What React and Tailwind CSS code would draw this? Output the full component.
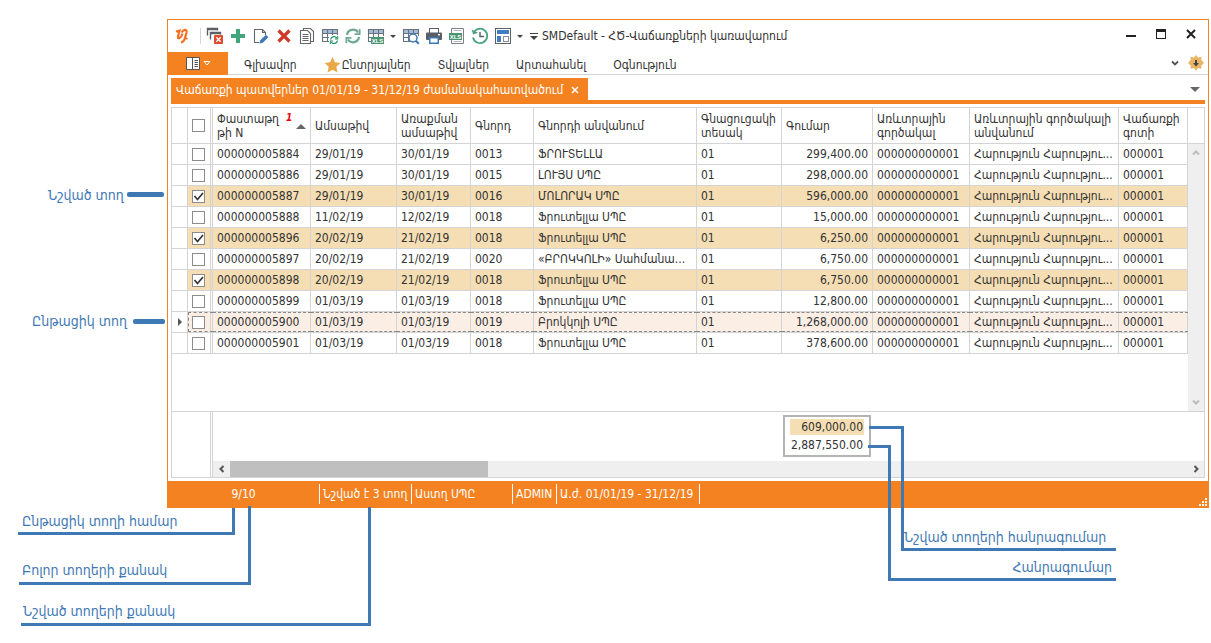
import React, { useState } from 'react';

const columns = [
	{ key: 'doc', label: 'Փաստաթղ թի N', width: 'w-[98px]', sorted: true },
	{ key: 'date', label: 'Ամսաթիվ', width: 'w-[86px]' },
	{ key: 'shipDate', label: 'Առաքման ամսաթիվ', width: 'w-[74px]' },
	{ key: 'buyer', label: 'Գնորդ', width: 'w-[63px]' },
	{ key: 'buyerName', label: 'Գնորդի անվանում', width: '' },
	{ key: 'priceType', label: 'Գնացուցակի տեսակ', width: 'w-[85px]' },
	{ key: 'sum', label: 'Գումար', width: 'w-[91px]', right: true },
	{ key: 'agent', label: 'Առևտրային գործակալ', width: 'w-[97px]' },
	{ key: 'agentName', label: 'Առևտրային գործակալի անվանում', width: 'w-[149px]' },
	{ key: 'zone', label: 'Վաճառքի գոտի', width: 'w-[69px]' },
];

const common = {
	priceType: '01',
	agent: '000000000001',
	agentName: 'Հարություն Հարությու...',
	zone: '000001',
};

const orders = [
	{ doc: '000000005884', date: '29/01/19', shipDate: '30/01/19', buyer: '0013', buyerName: 'ՖՐՈՒՏԵԼԼԱ', sum: '299,400.00' },
	{ doc: '000000005886', date: '29/01/19', shipDate: '30/01/19', buyer: '0015', buyerName: 'ԼՈՒՅՍ ՍՊԸ', sum: '298,000.00' },
	{ doc: '000000005887', date: '29/01/19', shipDate: '30/01/19', buyer: '0016', buyerName: 'ՄՈԼՈՐԱԿ ՍՊԸ', sum: '596,000.00' },
	{ doc: '000000005888', date: '11/02/19', shipDate: '12/02/19', buyer: '0018', buyerName: 'Ֆրուտելլա ՍՊԸ', sum: '15,000.00' },
	{ doc: '000000005896', date: '20/02/19', shipDate: '21/02/19', buyer: '0018', buyerName: 'Ֆրուտելլա ՍՊԸ', sum: '6,250.00' },
	{ doc: '000000005897', date: '20/02/19', shipDate: '21/02/19', buyer: '0020', buyerName: '«ԲՐՈԿԿՈԼԻ» Սահմանա...', sum: '6,750.00' },
	{ doc: '000000005898', date: '20/02/19', shipDate: '21/02/19', buyer: '0018', buyerName: 'Ֆրուտելլա ՍՊԸ', sum: '6,750.00' },
	{ doc: '000000005899', date: '01/03/19', shipDate: '01/03/19', buyer: '0018', buyerName: 'Ֆրուտելլա ՍՊԸ', sum: '12,800.00' },
	{ doc: '000000005900', date: '01/03/19', shipDate: '01/03/19', buyer: '0019', buyerName: 'Բրոկկոլի ՍՊԸ', sum: '1,268,000.00' },
	{ doc: '000000005901', date: '01/03/19', shipDate: '01/03/19', buyer: '0018', buyerName: 'Ֆրուտելլա ՍՊԸ', sum: '378,600.00' },
];

const CURRENT = '000000005900';

/* ---------- icons ---------- */

function Icon({ children }) {
	return (
		<svg width="18" height="18" viewBox="0 0 18 18" fill="none" aria-hidden="true">
			{children}
		</svg>
	);
}

const CloseAllIcon = () => (
	<Icon>
		<path d="M1.5 8.5v-7h10v2M1.5 2.5h10" stroke="#5a6068" strokeWidth="1.4" />
		<path d="M4.5 12.5v-7h10v2M4.5 6.5h10" stroke="#5a6068" strokeWidth="1.4" />
		<rect x="8" y="8" width="9" height="9" rx="1" fill="#dd4b2a" />
		<path d="M10.3 10.3l4.4 4.4M14.7 10.3l-4.4 4.4" stroke="#fff" strokeWidth="1.4" />
	</Icon>
);

const PlusIcon = () => (
	<Icon>
		<path d="M9 2v14M2 9h14" stroke="#42a57c" strokeWidth="4" />
	</Icon>
);

const EditIcon = () => (
	<Icon>
		<path d="M7.5 15.5h-5v-13h8l3 3V8M10.5 2.5v3h3" stroke="#62686e" strokeWidth="1.1" />
		<path d="M7.5 16.5l.8-3.2 5.6-5.5 2.5 2.4-5.6 5.5z" fill="#3d79b8" />
	</Icon>
);

const DeleteIcon = () => (
	<Icon>
		<path d="M3.5 3.5l11 11M14.5 3.5l-11 11" stroke="#d3392a" strokeWidth="3.2" />
	</Icon>
);

const CopyIcon = () => (
	<Icon>
		<path d="M5.5 3.5v-2h7l3 3v10h-3" stroke="#62686e" strokeWidth="1.1" />
		<path d="M2.5 3.5h7l3 3v10h-10z" fill="#fff" stroke="#62686e" strokeWidth="1.1" />
		<path d="M4.5 7.5h6M4.5 9.5h6M4.5 11.5h6M4.5 13.5h6" stroke="#62686e" />
	</Icon>
);

const Sheet = () => (
	<>
		<rect x="1" y="2" width="16" height="4" fill="#a3bcdc" />
		<path d="M1.5 2v13M6.5 2v13M11.5 2v8M16.5 2v7M1 2.5h16M1 6.5h16M1 10.5h11M1 14.5h8" stroke="#6b7178" strokeWidth="1.1" />
	</>
);

const SyncArrows = () => (
	<>
		<path d="M3 8a6 6 0 0 1 11-2.500M15 10a6 6 0 0 1-11 2.500" strokeWidth="2.200" />
		<path d="M15.600 2v5.200h-5M2.400 16v-5.200h5" strokeWidth="1.800" />
	</>
);

const RefreshTableIcon = () => (
	<Icon>
		<Sheet />
		<rect x="8" y="8" width="10" height="10" fill="#fff" />
		<g stroke="#1f9460" transform="translate(8 8) scale(.56)" strokeWidth="3">
			<SyncArrows />
		</g>
	</Icon>
);

const RefreshIcon = () => (
	<Icon>
		<g stroke="#6fa896">
			<SyncArrows />
		</g>
	</Icon>
);

const XlsTag = ({ x, y }) => (
	<>
		<rect x={x} y={y} width="13" height="7" fill="#4b9470" />
		<text x={x + 6.5} y={y + 6} textAnchor="middle" fontSize="6" fontWeight="700" fontFamily="Liberation Sans, sans-serif" fill="#fff">XLS</text>
	</>
);

const ExportXlsIcon = () => (
	<Icon>
		<Sheet />
		<XlsTag x={4} y={10} />
	</Icon>
);

const PreviewIcon = () => (
	<Icon>
		<Sheet />
		<circle cx="11" cy="11" r="4" fill="#fff" stroke="#3d79b8" strokeWidth="1.5" />
		<path d="M13.8 13.8l3 3" stroke="#3d79b8" strokeWidth="2" />
	</Icon>
);

const PrintIcon = () => (
	<Icon>
		<rect x="4.5" y="1.5" width="9" height="5" fill="#fff" stroke="#595f66" />
		<rect x="1" y="5.5" width="16" height="7.5" rx="1" fill="#595f66" />
		<rect x="4" y="10" width="10" height="7" fill="#3d79b8" />
		<rect x="5.5" y="11.5" width="7" height="4" fill="#fff" />
		<rect x="13" y="7" width="2" height="1.4" fill="#fff" />
	</Icon>
);

const XlsFileIcon = () => (
	<Icon>
		<path d="M3.500 16.500v-15h12v15z" stroke="#7b8187" />
		<XlsTag x={1} y={6} />
		<path d="M5.500 14.500h8M5.500 3.500h8" stroke="#b5babf" />
	</Icon>
);

const HistoryIcon = () => (
	<Icon>
		<path d="M2.6 5.6A7.2 7.2 0 1 1 2 10.5" stroke="#4ba07f" strokeWidth="1.8" />
		<path d="M.6 2.4l1.6 5 4.8-1.6z" fill="#4ba07f" />
		<path d="M9 5v4.5h4" stroke="#595f66" strokeWidth="1.4" />
	</Icon>
);

const LayoutIcon = () => (
	<Icon>
		<rect x="1.5" y="1.5" width="15" height="15" fill="#fff" stroke="#5b6169" />
		<rect x="3" y="3" width="12" height="4" fill="#3f7fc1" />
		<rect x="3" y="9" width="4" height="6" fill="#3f7fc1" />
		<rect x="9.5" y="9.5" width="5" height="5" stroke="#8a9097" />
	</Icon>
);

const Logo = () => (
	<svg width="14" height="16" viewBox="0 0 14 16" fill="none" stroke="#f36f21" aria-hidden="true">
		<path d="M1 3.500L4.500 2.500 3 8.500q-.4 2.200 1.400 1.600Q6.500 9 7.600 5.500" strokeWidth="2.200" />
		<path d="M6.500 4.500Q8.500 1.500 10.800 2q1.200.6.600 3L9.600 11q-.8 2.800-3.600 3.500" strokeWidth="2.200" />
		<path d="M9.800 9.500l2.700 1.500" strokeWidth="1.500" />
	</svg>
);

const Triangle = ({ className }) => (
	<svg width="10" height="5" viewBox="0 0 10 5" className={className} aria-hidden="true">
		<path d="M0 0h10L5 5z" fill="currentColor" />
	</svg>
);

const Chevron = ({ d, className }) => (
	<svg width="10" height="10" viewBox="0 0 10 10" fill="none" className={className} aria-hidden="true">
		<path d={d} stroke="currentColor" strokeWidth="2" />
	</svg>
);

/* ---------- small parts ---------- */

function ToolButton({ label, children }) {
	return (
		<button type="button" aria-label={label} className="flex h-6 w-[23px] items-center justify-center">
			{children}
		</button>
	);
}

function DropButton({ label }) {
	return (
		<button type="button" aria-label={label} className="flex h-6 w-3 items-center justify-center text-[#444]">
			<svg width="6" height="3" viewBox="0 0 6 3" aria-hidden="true">
				<path d="M0 0h6L3 3z" fill="currentColor" />
			</svg>
		</button>
	);
}

function CheckBox({ label, checked, onChange }) {
	return (
		<label className="relative block size-[13px]">
			<input
				type="checkbox"
				aria-label={label}
				checked={checked}
				onChange={onChange}
				className="peer block size-[13px] appearance-none border border-[#8c8c8c] bg-white"
			/>
			<svg viewBox="0 0 13 13" fill="none" className="pointer-events-none absolute inset-0 hidden size-[13px] peer-checked:block">
				<path d="M2.500 6l3 3.500L11 3" stroke="#333" strokeWidth="1.700" />
			</svg>
		</label>
	);
}

function TitleBar() {
	return (
		<header className="flex h-8 items-center">
			<div className="flex w-8 justify-center pr-1">
				<Logo />
			</div>
			<div className="mr-[2px] h-4 w-px bg-[#d4d4d4]" />
			<ToolButton label="Փակել բոլորը"><CloseAllIcon /></ToolButton>
			<ToolButton label="Ավելացնել"><PlusIcon /></ToolButton>
			<ToolButton label="Խմբագրել"><EditIcon /></ToolButton>
			<ToolButton label="Հեռացնել"><DeleteIcon /></ToolButton>
			<ToolButton label="Պատճենել"><CopyIcon /></ToolButton>
			<ToolButton label="Թարմացնել աղյուսակը"><RefreshTableIcon /></ToolButton>
			<ToolButton label="Թարմացնել"><RefreshIcon /></ToolButton>
			<ToolButton label="Արտահանել XLS"><ExportXlsIcon /></ToolButton>
			<DropButton label="Արտահանման տեսակներ" />
			<ToolButton label="Դիտել"><PreviewIcon /></ToolButton>
			<ToolButton label="Տպել"><PrintIcon /></ToolButton>
			<ToolButton label="XLS ֆայլ"><XlsFileIcon /></ToolButton>
			<ToolButton label="Պատմություն"><HistoryIcon /></ToolButton>
			<ToolButton label="Տեսք"><LayoutIcon /></ToolButton>
			<DropButton label="Տեսքեր" />
			<button type="button" aria-label="Կարգավորել վահանակը" className="flex h-6 w-4 items-center justify-center text-[#444]">
				<svg width="8" height="7" viewBox="0 0 8 7" aria-hidden="true">
					<path d="M0 0h8v1H0zM0 3h8L4 7z" fill="currentColor" />
				</svg>
			</button>
			<h1 className="flex-1 truncate">SMDefault - ՀԾ-Վաճառքների կառավարում</h1>
			<div className="flex pr-[2px] pb-1 text-[#222]">
				<button type="button" aria-label="Ծալել" className="flex h-6 w-[30px] items-center justify-center">
					<svg width="10" height="10" viewBox="0 0 10 10" aria-hidden="true"><path d="M0 6h10v2H0z" fill="currentColor" /></svg>
				</button>
				<button type="button" aria-label="Մեծացնել" className="flex h-6 w-[30px] items-center justify-center">
					<svg width="10" height="10" viewBox="0 0 10 10" aria-hidden="true"><path d="M0 0h10v10H0zM1 3v6h8V3z" fill="currentColor" fillRule="evenodd" /></svg>
				</button>
				<button type="button" aria-label="Փակել" className="flex h-6 w-[30px] items-center justify-center">
					<svg width="10" height="10" viewBox="0 0 10 10" aria-hidden="true"><path d="M1 1l8 8M9 1l-8 8" stroke="currentColor" strokeWidth="2" /></svg>
				</button>
			</div>
		</header>
	);
}

function Ribbon() {
	return (
		<nav className="flex h-[23px] border-b border-[#d4d4d4]">
			<button type="button" aria-label="Մենյու" className="flex h-[23px] w-[60px] items-center justify-center gap-[3px] bg-[#f58220]">
				<svg width="14" height="13" viewBox="0 0 14 13" aria-hidden="true">
					<path d="M.5.5h13v12H.5z" fill="#fff" stroke="#555" />
					<path d="M6.500 0v13" stroke="#555" />
					<path d="M8.500 3.500h3.500M8.500 5.500h3.500M8.500 7.500h3.500M8.500 9.500h3.500" stroke="#555" />
				</svg>
				<svg width="8" height="5" viewBox="0 0 8 5" aria-hidden="true">
					<path d="M1 .5h6L4 4z" fill="none" stroke="#fff" />
				</svg>
			</button>
			<div className="flex flex-1 items-center gap-[27px] pt-1 pl-4">
				<button type="button">Գլխավոր</button>
				<button type="button" className="flex items-center gap-px">
					<svg width="17" height="16" viewBox="0 0 24 24" aria-hidden="true">
						<path d="M12 0l3.600 8 8.400.9-6.300 5.800 1.800 8.600L12 19l-7.500 4.300 1.800-8.600L0 8.900 8.400 8z" fill="#eaa948" />
					</svg>
					Ընտրյալներ
				</button>
				<button type="button">Տվյալներ</button>
				<button type="button">Արտահանել</button>
				<button type="button">Օգնություն</button>
			</div>
			<div className="flex items-center gap-[9px] pr-1">
				<button type="button" aria-label="Ծալել ժապավենը" className="text-[#555]">
					<svg width="8" height="8" viewBox="0 0 8 8" fill="none" aria-hidden="true">
						<path d="M1 2.500l3 3 3-3" stroke="currentColor" strokeWidth="1.800" />
					</svg>
				</button>
				<button type="button" aria-label="Թարմացումներ">
					<svg width="16" height="16" viewBox="0 0 16 16" aria-hidden="true">
						<path d="M8 0l2 2.500 3.300-.8.1 3.300L16 8l-2.600 2.400-.1 3.300-3.300-.7L8 16l-2-3-3.300.7-.1-3.300L0 8l2.600-3-.1-3.300L6 2.500z" fill="#eab566" />
						<path d="M7 5h2v3h2l-3 3.500L5 8h2z" fill="#444" />
					</svg>
				</button>
			</div>
		</nav>
	);
}

function DocTabs() {
	return (
		<div className="mx-[3px] flex h-[29px] items-end border-b-4 border-[#f58220]">
			<div className="flex h-[22px] items-center gap-2 bg-[#f58220] pt-[2px] pr-[9px] pl-[5px] text-white">
				<span>Վաճառքի պատվերներ 01/01/19 - 31/12/19 ժամանակահատվածում</span>
				<button type="button" aria-label="Փակել ներդիրը">
					<svg width="8" height="8" viewBox="0 0 8 8" aria-hidden="true">
						<path d="M1 1l6 6M7 1L1 7" stroke="#fff" strokeWidth="1.500" />
					</svg>
				</button>
			</div>
			<button type="button" aria-label="Ներդիրներ" className="mr-[5px] mb-2 ml-auto text-[#666]">
				<Triangle />
			</button>
		</div>
	);
}

// Focus frame is drawn over the cells so the current row keeps its height
const focusCheck = "relative bg-[#fbeee5] before:pointer-events-none before:absolute before:inset-y-0 before:left-0 before:-right-[3px] before:border-y before:border-l before:border-dashed before:border-[#888] before:content-['']";
const focusCell = "relative bg-[#fbeee5] before:pointer-events-none before:absolute before:inset-y-0 before:left-0 before:-right-px before:border-y before:border-dashed before:border-[#888] before:content-['']";

function OrdersTable({ selected, onToggle, onToggleAll }) {
	return (
		<table className="w-full table-fixed border-separate border-spacing-0">
			<thead>
				<tr className="h-9 text-left leading-[14px]">
					<th className="w-4 border-r border-b border-[#d4d4d4]" />
					<th className="w-[25px] border-r-3 border-b border-r-[#d4d4d4] border-b-[#d4d4d4] pl-1 [border-right-style:double]">
						<CheckBox label="Նշել բոլորը" checked={selected.length === orders.length} onChange={onToggleAll} />
					</th>
					{columns.map((col) => (
						<th key={col.key} className={`border-r border-b border-[#d4d4d4] px-1 font-normal ${col.width}`}>
							{col.sorted ? (
								<div className="flex">
									<span className="w-[69px] shrink-0">{col.label}</span>
									<sup className="top-0 pt-px text-[10px] leading-none font-bold text-red-600 italic">1</sup>
									<Triangle className="mt-3 ml-auto shrink-0 rotate-180 text-[#666]" />
								</div>
							) : col.label}
						</th>
					))}
				</tr>
			</thead>
			<tbody>
				{orders.map((order) => {
					const isCurrent = order.doc === CURRENT;
					const isSelected = selected.includes(order.doc);
					const row = { ...common, ...order };
					const fill = isSelected ? 'bg-[#f5deb3]' : '';

					return (
						<tr key={order.doc} className="h-[21px]">
							<td className="border-r border-b border-[#d4d4d4]">
								{isCurrent && (
									<svg width="4" height="8" viewBox="0 0 4 8" className="ml-[6px] block" aria-hidden="true">
										<path d="M0 0l4 4-4 4z" fill="#555" />
									</svg>
								)}
							</td>
							<td className={`border-r-3 border-b border-r-[#d4d4d4] border-b-[#d4d4d4] pl-1 [border-right-style:double] ${isCurrent ? focusCheck : ''} ${fill}`}>
								<CheckBox label={order.doc} checked={isSelected} onChange={() => onToggle(order.doc)} />
							</td>
							{columns.map((col) => (
								<td
									key={col.key}
									className={`border-r border-b border-[#d4d4d4] px-1 leading-5 whitespace-nowrap ${col.right ? 'text-right' : ''} ${isCurrent ? focusCell : ''} ${fill}`}
								>
									{row[col.key]}
								</td>
							))}
						</tr>
					);
				})}
			</tbody>
		</table>
	);
}

function Grid() {
	const [selected, setSelected] = useState(['000000005887', '000000005896', '000000005898']);

	const toggle = (doc) => {
		setSelected(selected.includes(doc) ? selected.filter((d) => d !== doc) : [...selected, doc]);
	};

	const toggleAll = () => {
		setSelected(selected.length === orders.length ? [] : orders.map((o) => o.doc));
	};

	return (
		<main className="mx-[3px] mt-[3px] mb-[3px] border border-[#d4d4d4]">
			<div className="flex min-h-[304px] border-b border-[#d4d4d4]">
				<div className="min-w-0 flex-1">
					<OrdersTable selected={selected} onToggle={toggle} onToggleAll={toggleAll} />
				</div>
				<div className="flex w-4 flex-col">
					<div className="h-9 border-b border-[#d4d4d4]" />
					<div className="flex flex-1 flex-col items-center justify-between bg-[#efefef] py-1 text-[#bcbcbc]">
						<Chevron d="M2 6.500l3-3 3 3" />
						<Chevron d="M2 3.500l3 3 3-3" />
					</div>
				</div>
			</div>
			<footer className="flex">
				<div className="w-[41px] border-r-3 border-[#d4d4d4] [border-right-style:double]" />
				<div className="flex-1">
					<div className="flex h-[49px] justify-end pt-[3px] pr-[333px]">
						<div className="h-[42px] w-[88px] border-2 border-[#b4b4b4] px-[5px] text-right leading-4">
							<div className="mt-[2px] bg-[#f5deb3] pr-px">609,000.00</div>
							<div className="mt-[2px] pr-px">2,887,550.00</div>
						</div>
					</div>
					<div className="flex h-4 items-center bg-[#efefef] text-[#555]">
						<button type="button" aria-label="Ձախ" className="flex w-[17px] justify-center">
							<Chevron d="M6.500 2l-3 3 3 3" />
						</button>
						<div className="h-4 w-[258px] bg-[#bfbfbf]" />
						<button type="button" aria-label="Աջ" className="ml-auto flex w-[17px] justify-center">
							<Chevron d="M3.500 2l3 3-3 3" />
						</button>
					</div>
				</div>
			</footer>
		</main>
	);
}

function StatusBar() {
	return (
		<div className="flex h-[26px] items-center bg-[#f58220] text-white">
			<div className="w-[152px] border-r border-white text-center leading-5">9/10</div>
			<div className="w-[92px] border-r border-white pl-[3px] leading-5 whitespace-nowrap">Նշված է 3 տող</div>
			<div className="w-[101px] border-r border-white pl-[3px] leading-5">Աստղ ՍՊԸ</div>
			<div className="w-11 border-r border-white pl-[3px] leading-5">ADMIN</div>
			<div className="w-[143px] border-r border-white pl-[3px] leading-5 whitespace-nowrap">Ա.ժ. 01/01/19 - 31/12/19</div>
			<svg width="8" height="8" viewBox="0 0 8 8" className="mt-auto mr-px mb-px ml-auto" aria-hidden="true">
				<path d="M6 0h2v2H6zM3 3h2v2H3zM6 3h2v2H6zM0 6h2v2H0zM3 6h2v2H3zM6 6h2v2H6z" fill="#fff" />
			</svg>
		</div>
	);
}

// Callouts with their leader lines, drawn over the window
function Callouts() {
	return (
		<div className="pointer-events-none absolute inset-0 text-[14px] leading-5 whitespace-nowrap text-[#3f79b5]">
			<span className="absolute top-[185px] left-12">Նշված տող</span>
			<div className="absolute top-48 left-[127px] h-[5px] w-[37px] rounded-xs bg-[#3f79b5]" />
			<span className="absolute top-[311px] left-8">Ընթացիկ տող</span>
			<div className="absolute top-[319px] left-[133px] h-[5px] w-8 rounded-xs bg-[#3f79b5]" />

			<div className="absolute top-[508px] left-[18px] flex h-[27px] w-[217px] items-end border-r-3 border-b-3 border-[#3f79b5] pb-px pl-1">Ընթացիկ տողի համար</div>
			<div className="absolute top-[506px] left-[19px] flex h-[79px] w-[232px] items-end border-r-3 border-b-3 border-[#3f79b5] pb-[2px] pl-[3px]">Բոլոր տողերի քանակ</div>
			<div className="absolute top-[507px] left-[21px] flex h-[119px] w-[350px] items-end border-r-3 border-b-3 border-[#3f79b5] pb-[2px] pl-[2px]">Նշված տողերի քանակ</div>

			<div className="absolute top-[426px] right-[307px] h-[3px] w-[35px] bg-[#3f79b5]" />
			<div className="absolute top-[426px] right-[95px] flex h-[125px] w-[215px] items-end border-b-3 border-l-3 border-[#3f79b5] pb-px">Նշված տողերի հանրագումար</div>
			<div className="absolute top-[445px] right-[320px] h-[3px] w-[23px] bg-[#3f79b5]" />
			<div className="absolute top-[445px] right-[95px] flex h-[136px] w-[228px] items-end justify-end border-b-3 border-l-3 border-[#3f79b5] pr-1 pb-px">Հանրագումար</div>
		</div>
	);
}

export default function App() {
	return (
		<div className="relative min-h-screen bg-white pt-[19px] pr-[2px] pl-[167px] font-['DejaVu_Sans_Condensed','DejaVu_Sans',sans-serif] text-xs text-[#333]">
			<div className="border border-[#f58220] bg-white">
				<TitleBar />
				<Ribbon />
				<DocTabs />
				<Grid />
				<StatusBar />
			</div>
			<Callouts />
		</div>
	);
}
